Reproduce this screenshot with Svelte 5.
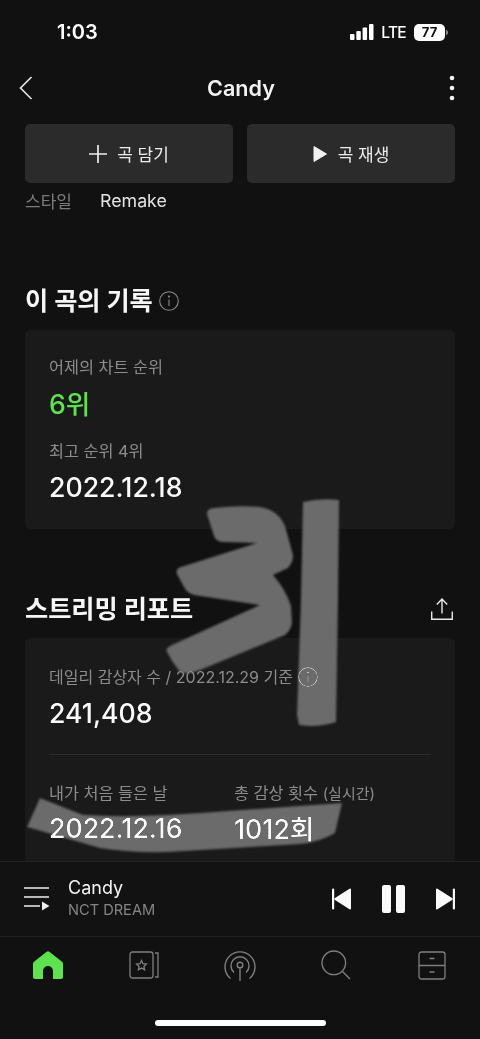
<script>
    const latest = [
        { label: "어제의 차트 순위", value: "6위", accent: true },
        { label: "최고 순위 4위", value: "2022.12.18", accent: false },
    ];
</script>

<div class="screen">
    <div class="status">
        <span class="time">1:03</span>
        <div class="status-right">
            <svg width="24" height="16" viewBox="0 0 24 16" fill="#fff">
                <rect x="0" y="10" width="4.5" height="6" rx="1" />
                <rect x="6.3" y="7" width="4.5" height="9" rx="1" />
                <rect x="12.6" y="3.5" width="4.5" height="12.5" rx="1" />
                <rect x="19" y="0" width="4.5" height="16" rx="1" />
            </svg>
            <span class="lte">LTE</span>
            <div class="battery"><span>77</span></div>
            <div class="nub"></div>
        </div>
    </div>

    <header class="nav">
        <svg class="back" width="14" height="24" viewBox="0 0 14 24" fill="none" stroke="#e8e8e8" stroke-width="1.6">
            <path d="M12.5 1 1.5 12l11 11" />
        </svg>
        <h1>Candy</h1>
        <svg class="more" width="6" height="26" viewBox="0 0 6 26" fill="#f0f0f0">
            <circle cx="3" cy="3" r="2.3" />
            <circle cx="3" cy="13" r="2.3" />
            <circle cx="3" cy="23" r="2.3" />
        </svg>
    </header>

    <main class="content">
        <div class="actions">
            <button>
                <svg width="18" height="18" viewBox="0 0 18 18" stroke="#eee" stroke-width="1.7">
                    <path d="M9 0v18M0 9h18" />
                </svg>
                곡 담기
            </button>
            <button>
                <svg width="14" height="18" viewBox="0 0 14 18" fill="#f0f0f0">
                    <path d="M1 1.5 13.5 9 1 16.5z" stroke="#f0f0f0" stroke-linejoin="round" />
                </svg>
                <span class="gap">곡 재생</span>
            </button>
        </div>

        <div class="meta">
            <span class="meta-key">스타일</span>
            <span class="meta-val">Remake</span>
        </div>

        <div class="head first">
            <h2>이 곡의 기록</h2>
            <svg class="info" width="20" height="20" viewBox="0 0 20 20" fill="none" stroke="#8a8a8a" stroke-width="1.1">
                <circle cx="10" cy="10" r="9.3" />
                <path d="M10 8.5v6.5" />
                <circle cx="10" cy="5.6" r=".5" fill="#8a8a8a" />
            </svg>
        </div>

        <section class="card record">
            {#each latest as row}
                <div class="label">{row.label}</div>
                <div class="value" class:accent={row.accent}>{row.value}</div>
            {/each}
        </section>

        <div class="head second">
            <h2>스트리밍 리포트</h2>
            <svg class="share" width="22" height="22" viewBox="0 0 22 22" fill="none" stroke="#e8e8e8" stroke-width="1.4">
                <path d="M11 15.500V1.500M5.800 6.500 11 1l5.200 5.500M.7 13.500v7.800h20.600v-7.800" />
            </svg>
        </div>

        <section class="card report">
            <div class="label with-icon">
                데일리 감상자 수 / 2022.12.29 기준
                <svg width="20" height="20" viewBox="0 0 20 20" fill="none" stroke="#c4c4c4" stroke-width="1.2">
                    <circle cx="10" cy="10" r="9.3" />
                    <path d="M10 8.5v6.5" />
                    <circle cx="10" cy="5.6" r=".5" fill="#c4c4c4" />
                </svg>
            </div>
            <div class="value">241,408</div>
            <hr />
            <div class="columns">
                <div>
                    <div class="label">내가 처음 들은 날</div>
                    <div class="value">2022.12.16</div>
                </div>
                <div>
                    <div class="label">총 감상 횟수 <small>(실시간)</small></div>
                    <div class="value">1012회</div>
                </div>
            </div>
        </section>

        <!-- hand drawn marks on top of the screenshot -->
        <svg class="scribble" width="480" height="860" viewBox="0 0 480 860" fill="#6b6b6b">
            <path d="M303 502Q320 498 339 500L338 600 336 722Q318 728 299 725L297 715 301 600z" />
            <path d="M207 514Q207 508 214 508Q238 505 260 507Q278 510 285 526L293 555Q293 563 288 568L273 575Q286 590 291 606L292 623Q291 630 285 635L200 670Q188 675 180 672Q172 662 167 652Q165 648 172 645L260 605 194 595Q187 593 184 587L177 574Q175 569 181 567L257 543 224 542Q216 542 214 536z" />
            <path d="M40 798 83 815Q140 818 200 813L342 803 335 833Q320 842 300 844L167 852Q130 853 100 848L27 827z" />
        </svg>
    </main>

    <div class="player">
        <svg class="queue" width="26" height="26" viewBox="0 0 26 26" fill="none" stroke="#eee" stroke-width="1.5">
            <path d="M0 2h25M0 11h25M0 20h16" />
            <path d="M18 15.500 25.500 20 18 24.500z" fill="#eee" stroke="none" />
        </svg>
        <div class="track">
            <div class="title">Candy</div>
            <div class="artist">NCT DREAM</div>
        </div>
        <div class="controls">
            <svg width="20" height="22" viewBox="0 0 20 22" fill="#fafafa">
                <rect x="0" y="0.500" width="2.200" height="21" rx="1" />
                <path d="M19 1.500v19a1 1 0 0 1-1.500.8L3 12a1.200 1.200 0 0 1 0-2L17.500.7a1 1 0 0 1 1.500.8z" />
            </svg>
            <svg width="23" height="28" viewBox="0 0 23 28" fill="#fafafa">
                <rect x="0" y="0" width="9" height="28" rx="2" />
                <rect x="14" y="0" width="9" height="28" rx="2" />
            </svg>
            <svg width="20" height="22" viewBox="0 0 20 22" fill="#fafafa">
                <rect x="17.800" y="0.500" width="2.200" height="21" rx="1" />
                <path d="M1 1.500v19a1 1 0 0 0 1.500.8L17 12a1.200 1.200 0 0 0 0-2L2.500.7A1 1 0 0 0 1 1.500z" />
            </svg>
        </div>
    </div>

    <nav class="tabs">
        <svg width="30" height="28" viewBox="0 0 30 28">
            <path fill="#5fe24f" d="M13.300 1 1 10.800A2.500 2.500 0 0 0 0 12.800V26a2 2 0 0 0 2 2h8V20a5 5 0 0 1 10 0v8h8a2 2 0 0 0 2-2V12.800a2.500 2.500 0 0 0-1-2L16.700 1a2.800 2.800 0 0 0-3.400 0z" />
        </svg>
        <svg width="30" height="28" viewBox="0 0 30 28" fill="none" stroke="#7f7f7f" stroke-width="1.300">
            <rect x="1" y="1" width="23" height="26" rx="2.500" />
            <path d="M26 2h3v24h-3" />
            <path d="M12.500 9.500 14 12.700l3.400.4-2.500 2.300.7 3.400-3.100-1.700-3.100 1.700.7-3.400-2.500-2.300 3.400-.4z" />
        </svg>
        <svg width="32" height="31" viewBox="0 0 32 31" fill="none" stroke="#7f7f7f" stroke-width="1.400">
            <path d="M6.500 28.500a15 15 0 1 1 19 0" />
            <path d="M10 22.500a9 9 0 1 1 12 0" />
            <circle cx="16" cy="15" r="2.800" />
            <path d="M16 18v12.500" stroke-linecap="round" />
        </svg>
        <svg width="30" height="30" viewBox="0 0 30 30" fill="none" stroke="#7f7f7f" stroke-width="1.400">
            <circle cx="12.800" cy="12.800" r="11.800" />
            <path d="M21.500 21.500 29 29" />
        </svg>
        <svg width="28" height="29" viewBox="0 0 28 29" fill="none" stroke="#7f7f7f" stroke-width="1.300">
            <rect x="1" y="1" width="26" height="27" rx="2.500" />
            <path d="M1 14.500h26M11.500 7.500h5M11.500 21h5" />
        </svg>
    </nav>

    <div class="home-bar"></div>
</div>

<style>
    :global(body) {
        margin: 0;
        background: #111112;
    }
    .screen {
        width: 480px;
        height: 1039px;
        display: flex;
        flex-direction: column;
        overflow: hidden;
        background: #111112;
        color: #fff;
        font-family: Inter, "Noto Sans CJK KR", sans-serif;
    }
    .status {
        height: 60px;
        flex: none;
        display: flex;
        justify-content: space-between;
        align-items: center;
        padding: 4px 32px 0 57px;
        box-sizing: border-box;
    }
    .time {
        font-size: 20px;
        font-weight: 600;
    }
    .status-right {
        display: flex;
        align-items: center;
    }
    .lte {
        font-size: 15.5px;
        font-weight: 500;
        margin: 0 8px 0 7px;
        letter-spacing: -0.7px;
    }
    .battery {
        width: 31px;
        height: 17px;
        border-radius: 5px;
        background: #fff;
        color: #111;
        font-size: 13px;
        font-weight: 700;
        line-height: 17px;
        text-align: center;
    }
    .nub {
        width: 2px;
        height: 5px;
        margin-left: 1px;
        border-radius: 0 2px 2px 0;
        background: #888;
    }
    .nav {
        height: 56px;
        flex: none;
        display: flex;
        align-items: center;
        justify-content: space-between;
        padding: 0 25px 0 19px;
    }
    .nav h1 {
        margin: 0;
        font-size: 21.6px;
        font-weight: 600;
        color: #f2f2f2;
        line-height: 30px;
    }
    .content {
        position: relative;
        height: 745px;
        flex: none;
        padding: 8px 25px 0;
        box-sizing: border-box;
        overflow: hidden;
    }
    .scribble {
        position: absolute;
        left: 0;
        top: -116px;
        pointer-events: none;
        filter: blur(1.2px);
        mix-blend-mode: lighten;
    }
    .actions {
        display: flex;
        gap: 14px;
    }
    button {
        flex: 1;
        height: 59px;
        border: 0;
        border-radius: 5px;
        background: #2b2b2b;
        color: #ececec;
        font: 400 17px Inter, "Noto Sans CJK KR", sans-serif;
        display: flex;
        align-items: center;
        justify-content: center;
        gap: 10px;
    }
    .gap {
        margin-left: 1px;
    }
    .meta {
        height: 34px;
        display: flex;
        align-items: center;
        font-size: 17px;
    }
    .meta-key {
        width: 75px;
        color: #7c7c7c;
    }
    .meta-val {
        font-size: 17.8px;
        color: #e4e4e4;
    }
    .head {
        height: 34px;
        display: flex;
        align-items: center;
    }
    .head.first {
        margin-top: 67px;
    }
    .head.second {
        margin-top: 63px;
        justify-content: space-between;
    }
    .head h2 {
        margin: 0;
        font-size: 25.2px;
        font-weight: 700;
        line-height: 34px;
        color: #f6f6f6;
    }
    .info {
        margin-left: 6px;
    }
    .share {
        margin-right: 2px;
    }
    .card {
        margin-top: 12px;
        background: #1a1a1a;
        border-radius: 5px;
        padding: 25px 24px 26px;
    }
    .report {
        padding-top: 27px;
    }
    .label {
        font-size: 16.3px;
        line-height: 24px;
        color: #8c8c8c;
    }
    .label small {
        font-size: 15px;
    }
    .with-icon {
        font-size: 16px;
        display: flex;
        align-items: center;
        gap: 5px;
    }
    .value {
        margin: 8px 0 20px;
        font-size: 26.7px;
        font-weight: 500;
        line-height: 32px;
        color: #fafafa;
    }
    .value:last-child {
        margin-bottom: 0;
    }
    .accent {
        margin-top: 9px;
        margin-bottom: 19px;
        color: #5fe24f;
    }
    hr {
        margin: 25px 0 26px;
        border: 0;
        border-top: 1px solid #2c2c2c;
    }
    .report .value {
        margin-bottom: 0;
    }
    .columns {
        display: flex;
    }
    .columns > div:first-child {
        width: 185px;
    }
    .columns .value {
        margin-top: 7px;
    }
    .player {
        height: 76px;
        flex: none;
        display: flex;
        align-items: center;
        padding: 0 25px 0 24px;
        box-sizing: border-box;
        border-top: 1px solid #222;
        border-bottom: 1px solid #222;
        background: #121212;
    }
    .track {
        margin-left: 18px;
        flex: 1;
    }
    .title {
        font-size: 18px;
        line-height: 23px;
        color: #f2f2f2;
    }
    .artist {
        font-size: 14.6px;
        line-height: 23px;
        color: #858585;
    }
    .controls {
        display: flex;
        align-items: center;
        gap: 30px;
    }
    .tabs {
        flex: none;
        display: grid;
        grid-template-columns: repeat(5, 96px);
        justify-items: center;
        align-items: center;
        height: 32px;
        padding-top: 12px;
    }
    .home-bar {
        width: 171px;
        height: 6px;
        margin: 39px auto 0;
        border-radius: 3px;
        background: #fff;
    }
</style>
